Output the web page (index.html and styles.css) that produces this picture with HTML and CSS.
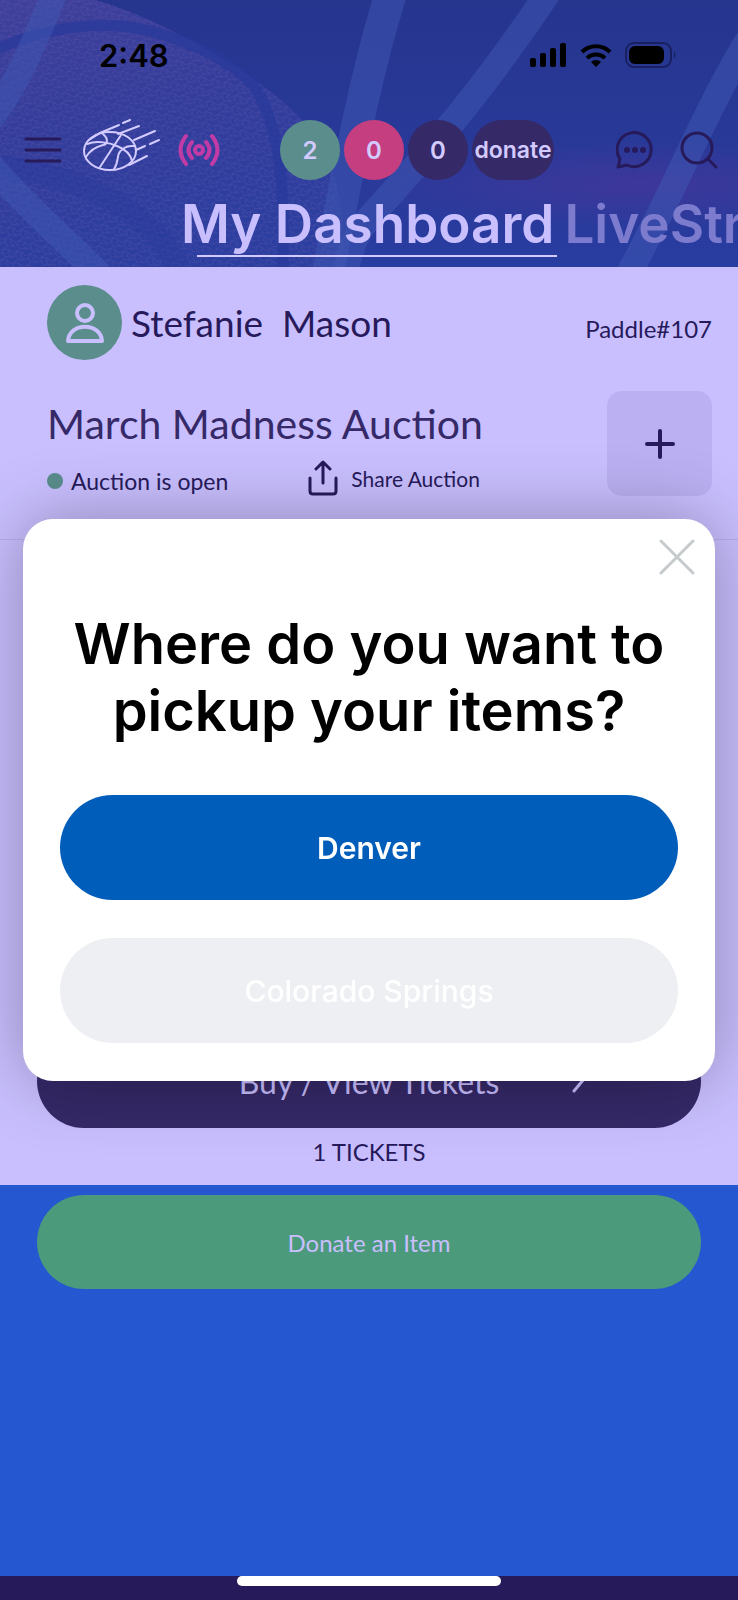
FILE: index.html
```html
<!DOCTYPE html>
<html lang="en">
<head>
  <meta charset="UTF-8">
  <meta name="viewport" content="width=device-width, initial-scale=1.0">
  <title>My Dashboard</title>
  <link rel="stylesheet" href="styles.css">
</head>
<body>
<header class="header">
  <svg class="header-bg" viewBox="0 0 738 267" preserveAspectRatio="xMinYMin slice" aria-hidden="true">
    <defs>
      <linearGradient id="sky" x1="0" y1="0" x2="0" y2="1">
        <stop offset="0" stop-color="#26358e"/>
        <stop offset="1" stop-color="#293ca0"/>
      </linearGradient>
      <linearGradient id="ball" x1="0" y1="0" x2="0.3" y2="1">
        <stop offset="0" stop-color="#3f409a"/>
        <stop offset="0.45" stop-color="#343d9b"/>
        <stop offset="1" stop-color="#2c3e9f"/>
      </linearGradient>
      <radialGradient id="glow">
        <stop offset="0" stop-color="#4c369a" stop-opacity="0.6"/>
        <stop offset="1" stop-color="#4c369a" stop-opacity="0"/>
      </radialGradient>
      <pattern id="grain" width="13" height="11" patternUnits="userSpaceOnUse" patternTransform="rotate(12)">
        <path d="M0 3L4 0L10 1L13 3M4 0L3 5L7 8L13 7M3 5L0 7M7 8L4 11M10 1L8 4L13 7" fill="none" stroke="#6a5cb0" stroke-width="1" opacity="0.28"/>
      </pattern>
    </defs>
    <rect width="738" height="267" fill="url(#sky)"/>
    <ellipse cx="640" cy="185" rx="300" ry="45" fill="url(#glow)"/>
    <path d="M0 0H95C150 15 220 55 255 80C290 105 320 130 335 180C345 215 345 245 342 267H0Z" fill="url(#ball)"/>
    <path d="M0 0H95C150 15 220 55 255 80C290 105 320 130 335 180C345 215 345 245 342 267H0Z" fill="url(#grain)"/>
    <g fill="none" stroke="#27399b" stroke-width="11" opacity="0.7">
      <path d="M-5 50C40 30 85 22 130 27C180 35 230 60 253 85C280 125 285 180 283 270"/>
      <path d="M0 165C50 175 140 190 180 270" stroke-width="22" opacity="0.5"/>
    </g>
    <g fill="none" stroke="#3f57b4" stroke-opacity="0.5" stroke-width="26">
      <path d="M56 -10C35 40 20 80 -10 120"/>
      <path d="M-10 165C20 200 60 235 100 275"/>
      <path d="M392 -10C370 60 355 130 328 275" stroke-width="32"/>
      <path d="M550 -10C490 80 440 140 372 215C355 232 350 250 345 275"/>
      <path d="M748 40C700 120 680 180 628 275"/>
    </g>
  </svg>

  <div class="status-bar">
    <span class="time">2:48</span>
    <div class="status-icons">
      <svg width="38" height="24" viewBox="0 0 38 24" aria-hidden="true">
        <rect x="1" y="15" width="6" height="9" rx="2"/>
        <rect x="11" y="10" width="6" height="14" rx="2"/>
        <rect x="21" y="5" width="6" height="19" rx="2"/>
        <rect x="31" y="0" width="6" height="24" rx="2"/>
      </svg>
      <svg width="32" height="24" viewBox="0 0 32 24" aria-hidden="true">
        <g fill="none" stroke="#000" stroke-width="4">
          <path d="M2 9A20 20 0 0 1 30 9"/>
          <path d="M7 15A13 13 0 0 1 25 15"/>
        </g>
        <path d="M11 19A7 7 0 0 1 21 19L16 24Z"/>
      </svg>
      <svg width="52" height="26" viewBox="0 0 52 26" aria-hidden="true">
        <rect x="1" y="1" width="45" height="24" rx="8" fill="none" stroke="#18205f" stroke-width="2"/>
        <rect x="4" y="4" width="35" height="18" rx="6"/>
        <path d="M49 9Q52 13 49 17Z" fill="#18205f"/>
      </svg>
    </div>
  </div>

  <div class="toolbar">
    <button class="icon-btn" aria-label="Menu">
      <svg width="38" height="28" viewBox="0 0 38 28" stroke="#271a5b" stroke-width="3" stroke-linecap="round"><path d="M2 3H36M2 14H36M2 25H36"/></svg>
    </button>
    <a class="logo" href="#" aria-label="Home">
      <svg width="78" height="54" viewBox="0 0 78 54" fill="none" stroke="#d3cbff" stroke-width="2" stroke-linecap="round">
        <ellipse cx="27" cy="33" rx="26" ry="19"/>
        <path d="M17 49L38 17M20 16C27 22 23 27 20 27C12 29 6 34 3 39M4 26C14 22 27 25 34 28C44 32 48 38 49 43M31 51C37 43 32 36 40 31C44 27 49 28 52 28M6 22L17 15L36 7M40 5L47 2M35 16L56 8M51 22L72 13M53 32L62 28M67 26L76 22M46 47L64 38"/>
      </svg>
    </a>
    <button class="icon-btn" aria-label="Live">
      <svg width="42" height="34" viewBox="0 0 42 34" fill="none" stroke="#c23aa5" stroke-width="4" stroke-linecap="round">
        <circle cx="21" cy="17" r="4"/>
        <path d="M8 3Q-3 17 8 31M34 3Q45 17 34 31M14 9Q7 17 14 25M28 9Q35 17 28 25"/>
      </svg>
    </button>
    <nav class="badges">
      <a class="badge green" href="#">2</a>
      <a class="badge pink" href="#">0</a>
      <a class="badge" href="#">0</a>
      <a class="badge wide" href="#">donate</a>
    </nav>
    <div class="tools">
      <button class="icon-btn" aria-label="Chat">
        <svg width="38" height="38" viewBox="0 0 38 38" fill="none" stroke="#271a5b" stroke-width="3" stroke-linejoin="round">
          <path d="M2 36L4 28A17 17 0 1 1 11 34Z"/>
          <g fill="#271a5b" stroke="none"><circle cx="11" cy="19" r="3"/><circle cx="19" cy="19" r="3"/><circle cx="27" cy="19" r="3"/></g>
        </svg>
      </button>
      <button class="icon-btn" aria-label="Search">
        <svg width="38" height="38" viewBox="0 0 38 38" fill="none" stroke="#271a5b" stroke-width="3" stroke-linecap="round"><circle cx="17" cy="17" r="15"/><path d="M28 28L36 36"/></svg>
      </button>
    </div>
  </div>

  <nav class="tabs">
    <a class="tab active" href="#">My Dashboard</a>
    <a class="tab" href="#">LiveStream</a>
  </nav>
</header>

<main class="panel">
  <section class="auction">
    <div class="user">
      <span class="avatar">
        <svg width="38" height="40" viewBox="0 0 38 40" fill="none" stroke="#c9bfff" stroke-width="4" stroke-linejoin="round"><circle cx="19" cy="10" r="8"/><path d="M2 38C3 19 35 19 36 38Z"/></svg>
      </span>
      <span class="user-name">Stefanie&nbsp; Mason</span>
      <span class="paddle">Paddle#107</span>
    </div>
    <div class="auction-row">
      <div class="auction-info">
        <h1>March Madness Auction</h1>
        <div class="auction-status">
          <span class="open">Auction is open</span>
          <a class="share" href="#">
            <svg width="30" height="36" viewBox="0 0 30 36" fill="none" stroke="#271a5b" stroke-width="3" stroke-linecap="round" stroke-linejoin="round"><path d="M2 18V31Q2 34 5 34H25Q28 34 28 31V18M15 23V2M8 9L15 2L22 9"/></svg>
            Share Auction
          </a>
        </div>
      </div>
      <button class="add-btn" aria-label="Add">
        <svg width="32" height="32" viewBox="0 0 32 32" stroke="#271a5b" stroke-width="4" stroke-linecap="round"><path d="M16 3V29M3 16H29"/></svg>
      </button>
    </div>
  </section>
  <section class="tickets">
    <button class="pill tickets-btn">
      <span></span>
      Buy / View Tickets
      <svg width="16" height="24" viewBox="0 0 16 24" fill="none" stroke="#c9bfff" stroke-width="3" stroke-linecap="round"><path d="M3 22L13 10L5 1"/></svg>
    </button>
    <p class="ticket-count">1 TICKETS</p>
  </section>
</main>

<section class="donate">
  <button class="pill donate-btn">Donate an Item</button>
</section>
<footer class="footer"><span class="home-indicator"></span></footer>

<div class="overlay">
  <div class="modal" role="dialog" aria-modal="true" aria-labelledby="modal-title">
    <button class="close" aria-label="Close">
      <svg width="36" height="36" viewBox="0 0 36 36" stroke="#c5cacd" stroke-width="3" stroke-linecap="round"><path d="M2 2L34 34M34 2L2 34"/></svg>
    </button>
    <h2 id="modal-title">Where do you want to pickup your items?</h2>
    <button class="choice primary">Denver</button>
    <button class="choice">Colorado Springs</button>
  </div>
</div>
</body>
</html>
```
FILE: styles.css
```css
* { box-sizing: border-box; }
body { margin: 0; min-height: 100vh; display: flex; flex-direction: column; font-family: Lato, sans-serif; color: #271a5b; background: #2457d0; }
button { border: none; padding: 0; background: none; font-family: inherit; color: inherit; cursor: pointer; }
a { color: inherit; text-decoration: none; }
svg { display: block; flex: none; }

/* header */
.header { position: relative; height: 267px; overflow: hidden; background: #26358e; font-family: Inter, sans-serif; }
.header-bg { position: absolute; top: 0; left: 0; width: 100%; height: 100%; }
.status-bar, .toolbar, .tabs { position: relative; display: flex; }
.status-bar { align-items: center; justify-content: space-between; height: 110px; padding: 0 61px 0 99px; color: #000; }
.time { font-size: 31px; font-weight: 600; }
.status-icons { display: flex; align-items: center; gap: 13px; }
.toolbar { align-items: center; height: 80px; padding: 0 20px 0 24px; }
.logo { margin: 0 17px 10px 21px; }
.badges { display: flex; gap: 4px; margin-left: 60px; }
.badge { display: flex; align-items: center; justify-content: center; width: 60px; height: 60px; border-radius: 30px; background: #352968; color: #d3cbff; font-size: 24px; font-weight: 600; }
.badge.green { background: #5a8d8c; }
.badge.pink { background: #c53e80; }
.badge.wide { width: 82px; font-size: 23px; }
.tools { display: flex; gap: 26px; margin-left: auto; }
.tabs { padding-left: 181px; gap: 10px; white-space: nowrap; }
.tab { height: 68px; font-size: 53px; line-height: 68px; font-weight: 600; color: #7d7bce; }
.tab.active { padding-right: 3px; margin-right: -3px; background: linear-gradient(#d3cbff, #d3cbff) 16px 65px / 100% 2px no-repeat; color: #c9bfff; }

/* dashboard */
.panel { background: #c9bfff; }
.auction { padding: 18px 26px 43px 47px; border-bottom: 1px solid #b9afea; }
.user { display: flex; align-items: center; gap: 9px; }
.avatar { display: flex; align-items: center; justify-content: center; width: 75px; height: 75px; border-radius: 50%; background: #5a8d8c; }
.user-name { font-size: 37px; }
.paddle { margin-left: auto; padding-top: 12px; font-size: 24px; }
.auction-row { display: flex; justify-content: space-between; margin-top: 31px; }
.auction h1 { margin: 8px 0 11px; font-size: 41px; line-height: 50px; font-weight: 400; color: #352968; }
.auction-status { display: flex; align-items: center; height: 36px; }
.open { display: flex; align-items: center; gap: 8px; padding-top: 6px; font-size: 23px; }
.open::before { content: ""; width: 16px; height: 16px; border-radius: 50%; background: #5a8d8c; }
.share { display: flex; align-items: center; gap: 13px; margin-left: 80px; font-size: 21px; }
.add-btn { display: flex; align-items: center; justify-content: center; width: 105px; height: 105px; border-radius: 15px; background: #bbb0f2; }
.tickets { padding: 494px 37px 17px; }
.pill { display: flex; align-items: center; justify-content: center; width: 100%; height: 94px; border-radius: 47px; color: #c9bfff; font-size: 24px; }
.tickets-btn { display: grid; grid-template-columns: 1fr auto 1fr; gap: 72px; background: #352968; font-size: 32px; }
.ticket-count { margin: 8px 0 0; font-size: 24px; line-height: 32px; text-align: center; }
.donate { flex: 1; padding: 10px 37px; background: #2457d0; }
.donate-btn { background: #4b9a7c; }
.footer { display: flex; justify-content: center; height: 24px; background: #271a5b; }
.home-indicator { width: 264px; height: 10px; border-radius: 5px; background: #fff; }

/* pickup dialog */
.overlay { position: fixed; inset: 0; display: flex; align-items: center; padding: 0 23px; }
.modal { display: flex; flex-direction: column; width: 100%; padding: 20px 37px 38px; border-radius: 30px; background: #fff; box-shadow: 0 0 70px rgba(0, 0, 0, 0.3); font-family: Inter, sans-serif; }
.close { align-self: flex-end; margin-right: -17px; }
.modal h2 { margin: 36px -10px 50px; color: #000; font-size: 56px; line-height: 67px; font-weight: 600; text-align: center; }
.choice { height: 105px; border-radius: 53px; background: #edeff3; color: #fff; font-size: 30px; font-weight: 500; }
.choice.primary { margin-bottom: 38px; background: #005dba; font-weight: 600; }
```
